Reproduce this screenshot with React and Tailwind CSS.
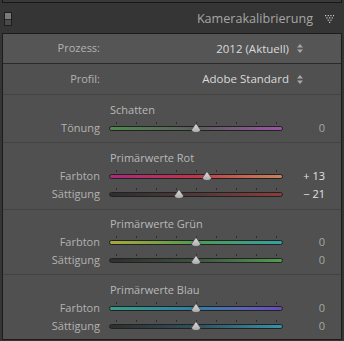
import React from 'react';

// Reihen des Kalibrierungs-Panels
const sections = [
  {
    title: 'Schatten',
    pad: 'pt-[6px] pb-[5px]',
    rows: [
      { label: 'Tönung', value: '0', pos: 0.5, track: 'bg-linear-to-r from-[#4d8a4d] via-[#5c5c5c] to-[#9a52a6]' },
    ],
  },
  {
    title: 'Primärwerte Rot',
    pad: 'pt-[6px] pb-[6px]',
    rows: [
      { label: 'Farbton', value: '+ 13', pos: 0.565, bright: true, track: 'bg-linear-to-r from-[#a8287c] via-[#c23448] to-[#c4845a]' },
      { label: 'Sättigung', value: '− 21', pos: 0.405, bright: true, track: 'bg-linear-to-r from-[#2e2e2e] via-[#4e3a3a] to-[#8e3a3a]' },
    ],
  },
  {
    title: 'Primärwerte Grün',
    pad: 'pt-[5px] pb-[5px]',
    rows: [
      { label: 'Farbton', value: '0', pos: 0.5, track: 'bg-linear-to-r from-[#a8a83a] via-[#4e9a4e] to-[#34a0a0]' },
      { label: 'Sättigung', value: '0', pos: 0.5, track: 'bg-linear-to-r from-[#2e2e2e] via-[#3e523e] to-[#4e9e4e]' },
    ],
  },
  {
    title: 'Primärwerte Blau',
    pad: 'pt-[6px] pb-[4px]',
    rows: [
      { label: 'Farbton', value: '0', pos: 0.5, track: 'bg-linear-to-r from-[#34a086] via-[#2e7ea8] to-[#6a48c0]' },
      { label: 'Sättigung', value: '0', pos: 0.5, track: 'bg-linear-to-r from-[#2e2e2e] via-[#2e5060] to-[#3494aa]' },
    ],
  },
];

const ticks = [7, 27, 47, 67, 87, 107, 127, 147, 167];

function UpDown() {
  return (
    <svg width="6" height="9" viewBox="0 0 6 9" className="ml-[8px]">
      <path d="M3 0 L6 3.5 L0 3.5 Z" fill="#a8a8a8" />
      <path d="M0 5.5 L6 5.5 L3 9 Z" fill="#a8a8a8" />
    </svg>
  );
}

function Thumb() {
  return (
    <svg width="10" height="10" viewBox="0 0 10 10">
      <defs>
        <linearGradient id="tg" x1="0" y1="0" x2="0" y2="1">
          <stop offset="0" stopColor="#e0e0e0" />
          <stop offset="1" stopColor="#a8a8a8" />
        </linearGradient>
      </defs>
      <path d="M5 0.5 L9.3 6.5 Q9.5 9.5 5 9.5 Q0.5 9.5 0.7 6.5 Z" fill="url(#tg)" stroke="#3a3a3a" strokeWidth="0.6" />
    </svg>
  );
}

function Slider({ label, value, pos, track, bright }) {
  return (
    <div className="flex h-[18px] items-center">
      <span className="w-[97px] text-right text-[#b2b2b2]">{label}</span>
      <div className="relative ml-[9px] h-[18px] w-[174px]">
        {ticks.map((t) => (
          <span key={t} className="absolute top-[3px] h-[2px] w-[1px] bg-[#2e2e2e]" style={{ left: t }} />
        ))}
        <div className={`absolute left-0 right-0 top-[7px] h-[5px] rounded-full border border-[#222] ${track}`} />
        <div className="absolute top-[4px]" style={{ left: pos * 174 - 5 }}>
          <Thumb />
        </div>
      </div>
      <span className={`ml-auto mr-[16px] text-right ${bright ? 'text-[#e4e4e4]' : 'text-[#a6a6a6]'}`}>{value}</span>
    </div>
  );
}

export default function App() {
  return (
    <div
      className="h-[341px] w-[344px] overflow-hidden bg-[#353535] text-[11px]"
      style={{ fontFamily: '"Open Sans", "DejaVu Sans", sans-serif' }}
    >
      {/* Rest des Panels darüber */}
      <div className="mx-[2px] h-[3px] border-x border-b border-[#181818] bg-[#3a3a3a]" />

      {/* Kopfzeile */}
      <div className="flex h-[30px] items-center bg-[#353535] pt-[2px]">
        <div className="ml-[4px] flex h-[14px] w-[8px] flex-col border border-[#1e1e1e]">
          <div className="h-1/2 bg-[#7a7a7a]" />
          <div className="h-1/2 border-t border-[#2a2a2a] bg-[#4a4a4a]" />
        </div>
        <span className="ml-auto text-[12.6px] text-[#a6a6a6]">Kamerakalibrierung</span>
        <svg width="9" height="8" viewBox="0 0 9 8" className="ml-[12px] mr-[10px]">
          {[0, 2.67, 5.33, 8].map((x) => <rect key={'a' + x} x={x} y="0" width="1.2" height="1.2" fill="#d0d0d0" />)}
          {[1.33, 4, 6.67].map((x) => <rect key={'b' + x} x={x} y="2.3" width="1.2" height="1.2" fill="#d0d0d0" />)}
          {[2.67, 5.33].map((x) => <rect key={'c' + x} x={x} y="4.6" width="1.2" height="1.2" fill="#d0d0d0" />)}
          <rect x="4" y="6.8" width="1.2" height="1.2" fill="#d0d0d0" />
        </svg>
      </div>

      {/* Panel */}
      <div className="mx-[2px] border border-[#1c1c1c] bg-[#505050]">
        <div className="flex h-[30px] items-center border-b border-[#2a2a2a] bg-[#555555]">
          <span className="w-[97px] text-right text-[#b2b2b2]">Prozess:</span>
          <div className="ml-auto mr-[38px] flex items-center text-[11.5px] text-[#dadada]">
            2012 (Aktuell)
            <UpDown />
          </div>
        </div>
        <div className="flex h-[31px] items-center border-b border-[#434343]">
          <span className="w-[97px] text-right text-[#b2b2b2]">Profil:</span>
          <div className="ml-auto mr-[38px] flex items-center text-[11.5px] text-[#dadada]">
            Adobe Standard
            <UpDown />
          </div>
        </div>

        {sections.map((s, i) => (
          <div key={s.title} className={`${s.pad} ${i < sections.length - 1 ? 'border-b border-[#434343]' : ''}`}>
            <div className="flex h-[18px] items-center pl-[107px] text-[#b8b8b8]">{s.title}</div>
            {s.rows.map((r) => (
              <Slider key={r.label} {...r} />
            ))}
          </div>
        ))}
      </div>
    </div>
  );
}
